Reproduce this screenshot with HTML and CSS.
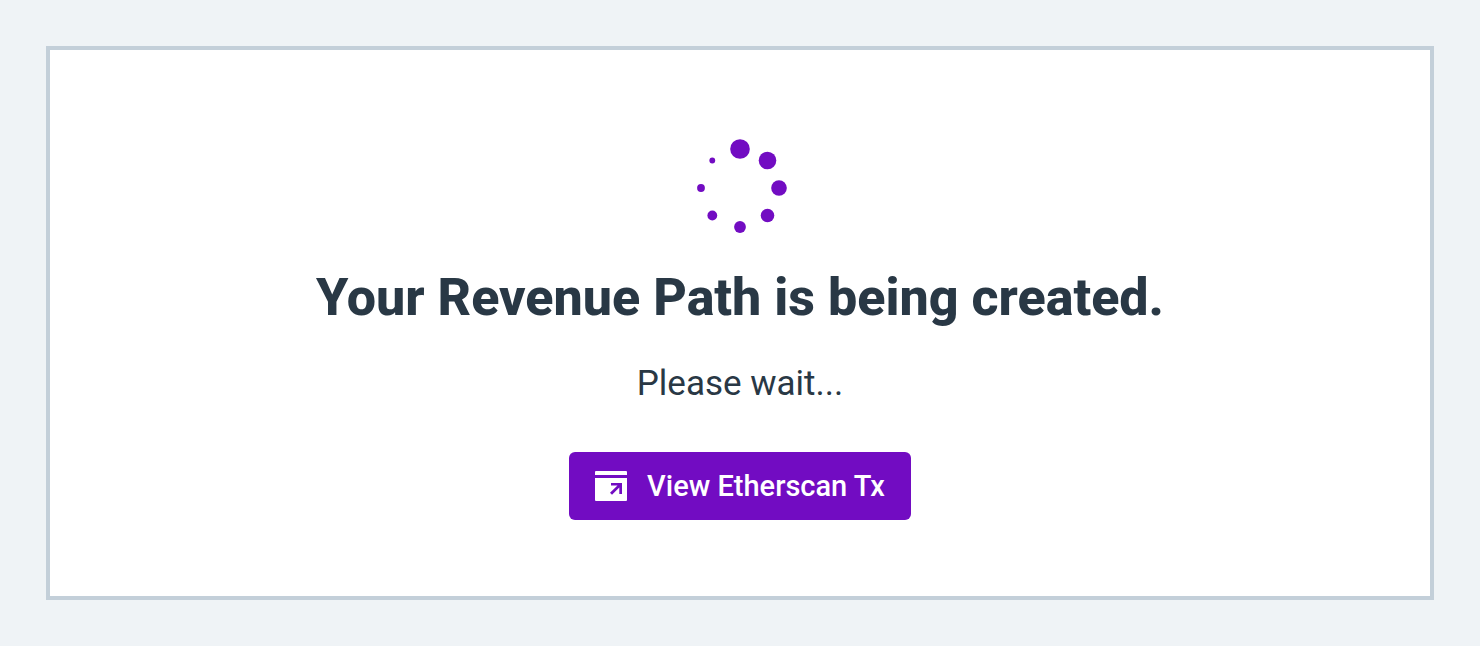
FILE: index.html
```html
<!DOCTYPE html>
<html lang="en">
<head>
<meta charset="utf-8">
<title>Revenue Path</title>
<link rel="stylesheet" href="styles.css">
</head>
<body>
<main class="card">
  <svg class="spinner" viewBox="0 0 96 96" role="img" aria-label="Loading">
    <circle cx="48" cy="11" r="9.8"/>
    <circle cx="75.500" cy="22.500" r="8.800"/>
    <circle cx="87" cy="50" r="7.800"/>
    <circle cx="75.500" cy="77.500" r="6.800"/>
    <circle cx="48" cy="89" r="5.900"/>
    <circle cx="20.300" cy="77.500" r="4.900"/>
    <circle cx="9" cy="50" r="3.900"/>
    <circle cx="20.300" cy="22.500" r="2.900"/>
  </svg>
  <h1 class="title">Your Revenue Path is being created.</h1>
  <p class="message">Please wait...</p>
  <a class="button" href="#">
    <svg class="button-icon" viewBox="0 0 32 30" aria-hidden="true">
      <path d="M1 0H31Q32 0 32 1V4H0V1Q0 0 1 0Z"/>
      <path fill-rule="evenodd" d="M0 7H32V29Q32 30 31 30H1Q0 30 0 29ZM16 12V14.500H22.500L15 21.800L17 23.800L24.300 16.500V23H27V12Z"/>
    </svg>
    <span>View Etherscan Tx</span>
  </a>
</main>
</body>
</html>
```
FILE: styles.css
```css
* { box-sizing: border-box; }
body {
  margin: 0;
  padding: 46px;
  min-height: 100vh;
  display: flex;
  background: #eff3f6;
  color: #293845;
  font-family: Roboto, sans-serif;
}
.card {
  flex: 1;
  display: flex;
  flex-direction: column;
  align-items: center;
  padding: 88px 24px 76px;
  background: #fff;
  border: 4px solid #c3cfd9;
}
.spinner { width: 96px; height: 96px; fill: #720cc2; }
.title { margin: 32px 0 0; font-size: 52px; line-height: 64px; font-weight: 800; text-align: center; }
.message { margin: 32px 0 0; font-size: 35px; line-height: 44px; }
.button {
  display: flex;
  align-items: center;
  gap: 20px;
  margin-top: 46px;
  padding: 0 26px;
  height: 68px;
  border-radius: 6px;
  background: #720cc2;
  color: #fff;
  font-size: 29px;
  font-weight: 500;
  text-decoration: none;
}
.button-icon { width: 32px; height: 30px; fill: #fff; }
```
